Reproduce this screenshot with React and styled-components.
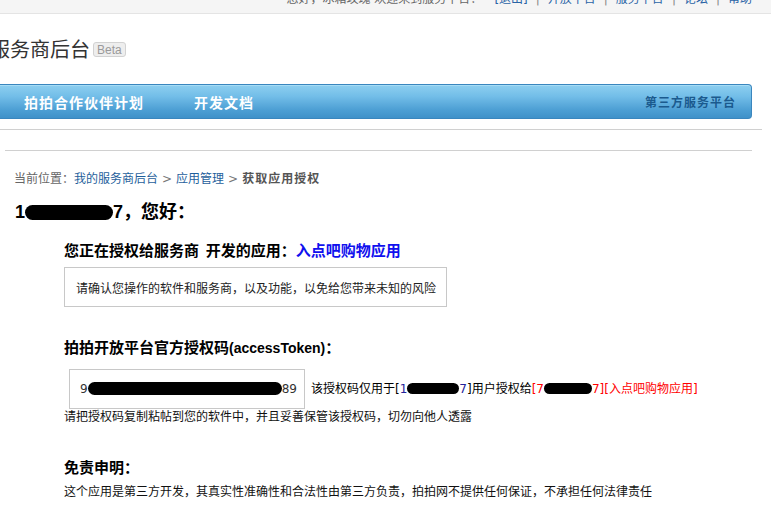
import React from "react";
import styled, { createGlobalStyle } from "styled-components";

const GlobalStyle = createGlobalStyle`
  html, body { margin: 0; padding: 0; background: #fff; }
  body {
    font-family: "DejaVu Sans", "Noto Sans CJK SC", sans-serif;
    font-size: 12px;
    color: #000;
    overflow: hidden;
  }
`;

const Page = styled.div`
  width: 771px;
  height: 510px;
  overflow: hidden;
`;

const TopBar = styled.div`
  height: 13px;
  background: #f5f5f5;
  border-bottom: 1px solid #e4e4e4;
  display: flex;
  justify-content: flex-end;
  align-items: flex-start;
  padding-right: 19px;
  overflow: hidden;
`;

const TopInner = styled.div`
  display: flex;
  align-items: center;
  line-height: 16px;
  margin-top: -9px;
  white-space: nowrap;
`;

const TopText = styled.span`
  color: #666;
  margin-right: ${(p) => p.$gap || 0}px;
`;

const TopLink = styled.a`
  color: #2a64a6;
  text-decoration: none;
`;

const TopSep = styled.span`
  color: #888;
  margin: 0 8px;
`;

const Header = styled.div`
  height: 70px;
  display: flex;
  align-items: center;
`;

const Title = styled.h1`
  margin: 0 0 0 -10px;
  font-family: "Noto Sans CJK SC", sans-serif;
  font-size: 20px;
  font-weight: normal;
  color: #333;
  line-height: 28px;
`;

const Badge = styled.span`
  margin-left: 3px;
  margin-top: 1px;
  height: 15px;
  line-height: 14px;
  box-sizing: border-box;
  padding: 0 3px;
  font-family: "Liberation Sans", sans-serif;
  font-size: 12px;
  color: #9a9a9a;
  background: #eeeeee;
  border: 1px solid #d2d2d2;
  border-radius: 3px;
`;

const NavBar = styled.div`
  width: 752px;
  height: 35px;
  box-sizing: border-box;
  display: flex;
  align-items: center;
  padding: 0 15px 0 24px;
  background: linear-gradient(#8dcff0 0%, #72bde8 35%, #4d9fd4 75%, #3f91c9 100%);
  border: 1px solid #3a86be;
  border-left: none;
  border-radius: 0 4px 4px 0;
  box-shadow: inset 0 1px 0 #a6dcf5;
`;

const NavItem = styled.a`
  font-family: "Noto Sans CJK SC", sans-serif;
  font-size: 14px;
  font-weight: bold;
  letter-spacing: 1px;
  color: #fff;
  text-decoration: none;
  margin-right: 50px;
`;

const NavRight = styled.a`
  margin-left: auto;
  font-family: "Noto Sans CJK SC", sans-serif;
  font-size: 12px;
  font-weight: bold;
  letter-spacing: 1px;
  color: #1b5a8e;
  text-decoration: none;
`;

const Rule = styled.div`
  height: 1px;
  background: #d0d0d0;
  width: ${(p) => p.$w}px;
  margin-top: ${(p) => p.$top}px;
  margin-left: ${(p) => p.$left || 0}px;
`;

const Breadcrumb = styled.div`
  margin-top: 18px;
  padding-left: 14px;
  line-height: 20px;
  color: #666;
  display: flex;
  align-items: center;
`;

const CrumbLink = styled.a`
  color: #1f5f9c;
  text-decoration: none;
`;

const CrumbSep = styled.span`
  color: #777;
  margin: 0 4px;
`;

const CrumbCurrent = styled.span`
  color: #555;
  font-weight: bold;
  letter-spacing: 1px;
`;

const Greeting = styled.div`
  margin-top: 11px;
  padding-left: 15px;
  line-height: 24px;
  font-family: "Liberation Sans", "Noto Sans CJK SC", sans-serif;
  font-size: 18px;
  font-weight: bold;
  color: #000;
`;

const Blob = styled.span`
  display: inline-block;
  width: ${(p) => p.$w}px;
  height: ${(p) => p.$h}px;
  background: #000;
  border-radius: ${(p) => p.$h / 2}px;
  vertical-align: middle;
  margin-top: -2px;
`;

const Section = styled.div`
  padding-left: 64px;
`;

const Heading = styled.h2`
  margin: ${(p) => p.$top}px 0 0 0;
  font-family: "Noto Sans CJK SC", sans-serif;
  font-size: 15px;
  font-weight: bold;
  line-height: 22px;
  color: #000;
`;

const Latin = styled.span`
  font-family: "Liberation Sans", sans-serif;
  font-size: 14px;
`;

const AppName = styled.span`
  color: #1010ee;
`;

const NoticeBox = styled.div`
  margin-top: 6px;
  width: 383px;
  height: 40px;
  box-sizing: border-box;
  border: 1px solid #c8c8c8;
  padding-left: 11px;
  display: flex;
  align-items: center;
  font-family: "Noto Sans CJK SC", sans-serif;
  color: #222;
`;

const TokenRow = styled.div`
  margin-top: 10px;
  display: flex;
  align-items: center;
`;

const TokenBox = styled.div`
  margin-left: 5px;
  width: 236px;
  height: 40px;
  box-sizing: border-box;
  border: 1px solid #c8c8c8;
  padding-left: 10px;
  display: flex;
  align-items: center;
  color: #333;
`;

const TokenNote = styled.div`
  margin-left: 6px;
  margin-top: -3px;
  color: #000;
  white-space: nowrap;
`;

const Dim = styled.span`
  color: #22229a;
`;

const Red = styled.span`
  color: #f00;
`;

const Text = styled.p`
  margin: ${(p) => p.$top}px 0 0 0;
  line-height: ${(p) => p.$lh}px;
  font-family: "Noto Sans CJK SC", sans-serif;
  color: #111;
`;

export default function App() {
  return (
    <Page>
      <GlobalStyle />
      <TopBar>
        <TopInner>
          <TopText $gap={12}>您好，冰箱玫瑰 欢迎来到服务平台：</TopText>
          <TopLink>[退出]</TopLink>
          <TopSep>|</TopSep>
          <TopLink>开放平台</TopLink>
          <TopSep>|</TopSep>
          <TopLink>服务平台</TopLink>
          <TopSep>|</TopSep>
          <TopLink>论坛</TopLink>
          <TopSep>|</TopSep>
          <TopLink>帮助</TopLink>
        </TopInner>
      </TopBar>

      <Header>
        <Title>服务商后台</Title>
        <Badge>Beta</Badge>
      </Header>

      <NavBar>
        <NavItem>拍拍合作伙伴计划</NavItem>
        <NavItem>开发文档</NavItem>
        <NavRight>第三方服务平台</NavRight>
      </NavBar>

      <Rule $w={762} $top={10} />
      <Rule $w={747} $top={20} $left={5} />

      <Breadcrumb>
        当前位置：<CrumbLink>我的服务商后台</CrumbLink>
        <CrumbSep>&gt;</CrumbSep>
        <CrumbLink>应用管理</CrumbLink>
        <CrumbSep>&gt;</CrumbSep>
        <CrumbCurrent>获取应用授权</CrumbCurrent>
      </Breadcrumb>

      <Greeting>
        1<Blob $w={88} $h={15} />7，您好：
      </Greeting>

      <Section>
        <Heading $top={15}>
          您正在授权给服务商{"\u00a0\u00a0"}开发的应用：<AppName>入点吧购物应用</AppName>
        </Heading>
        <NoticeBox>请确认您操作的软件和服务商，以及功能，以免给您带来未知的风险</NoticeBox>

        <Heading $top={29}>
          拍拍开放平台官方授权码<Latin>(accessToken)</Latin>：
        </Heading>
        <TokenRow>
          <TokenBox>
            9<Blob $w={194} $h={13} />89
          </TokenBox>
          <TokenNote>
            该授权码仅用于[<Dim>1</Dim>
            <Blob $w={52} $h={11} />
            <Dim>7</Dim>]用户授权给<Red>[7</Red>
            <Blob $w={48} $h={11} />
            <Red>7][入点吧购物应用]</Red>
          </TokenNote>
        </TokenRow>
        <Text $top={0} $lh={14}>
          请把授权码复制粘帖到您的软件中，并且妥善保管该授权码，切勿向他人透露
        </Text>

        <Heading $top={33}>免责申明：</Heading>
        <Text $top={4} $lh={18}>
          这个应用是第三方开发，其真实性准确性和合法性由第三方负责，拍拍网不提供任何保证，不承担任何法律责任
        </Text>
      </Section>
    </Page>
  );
}
